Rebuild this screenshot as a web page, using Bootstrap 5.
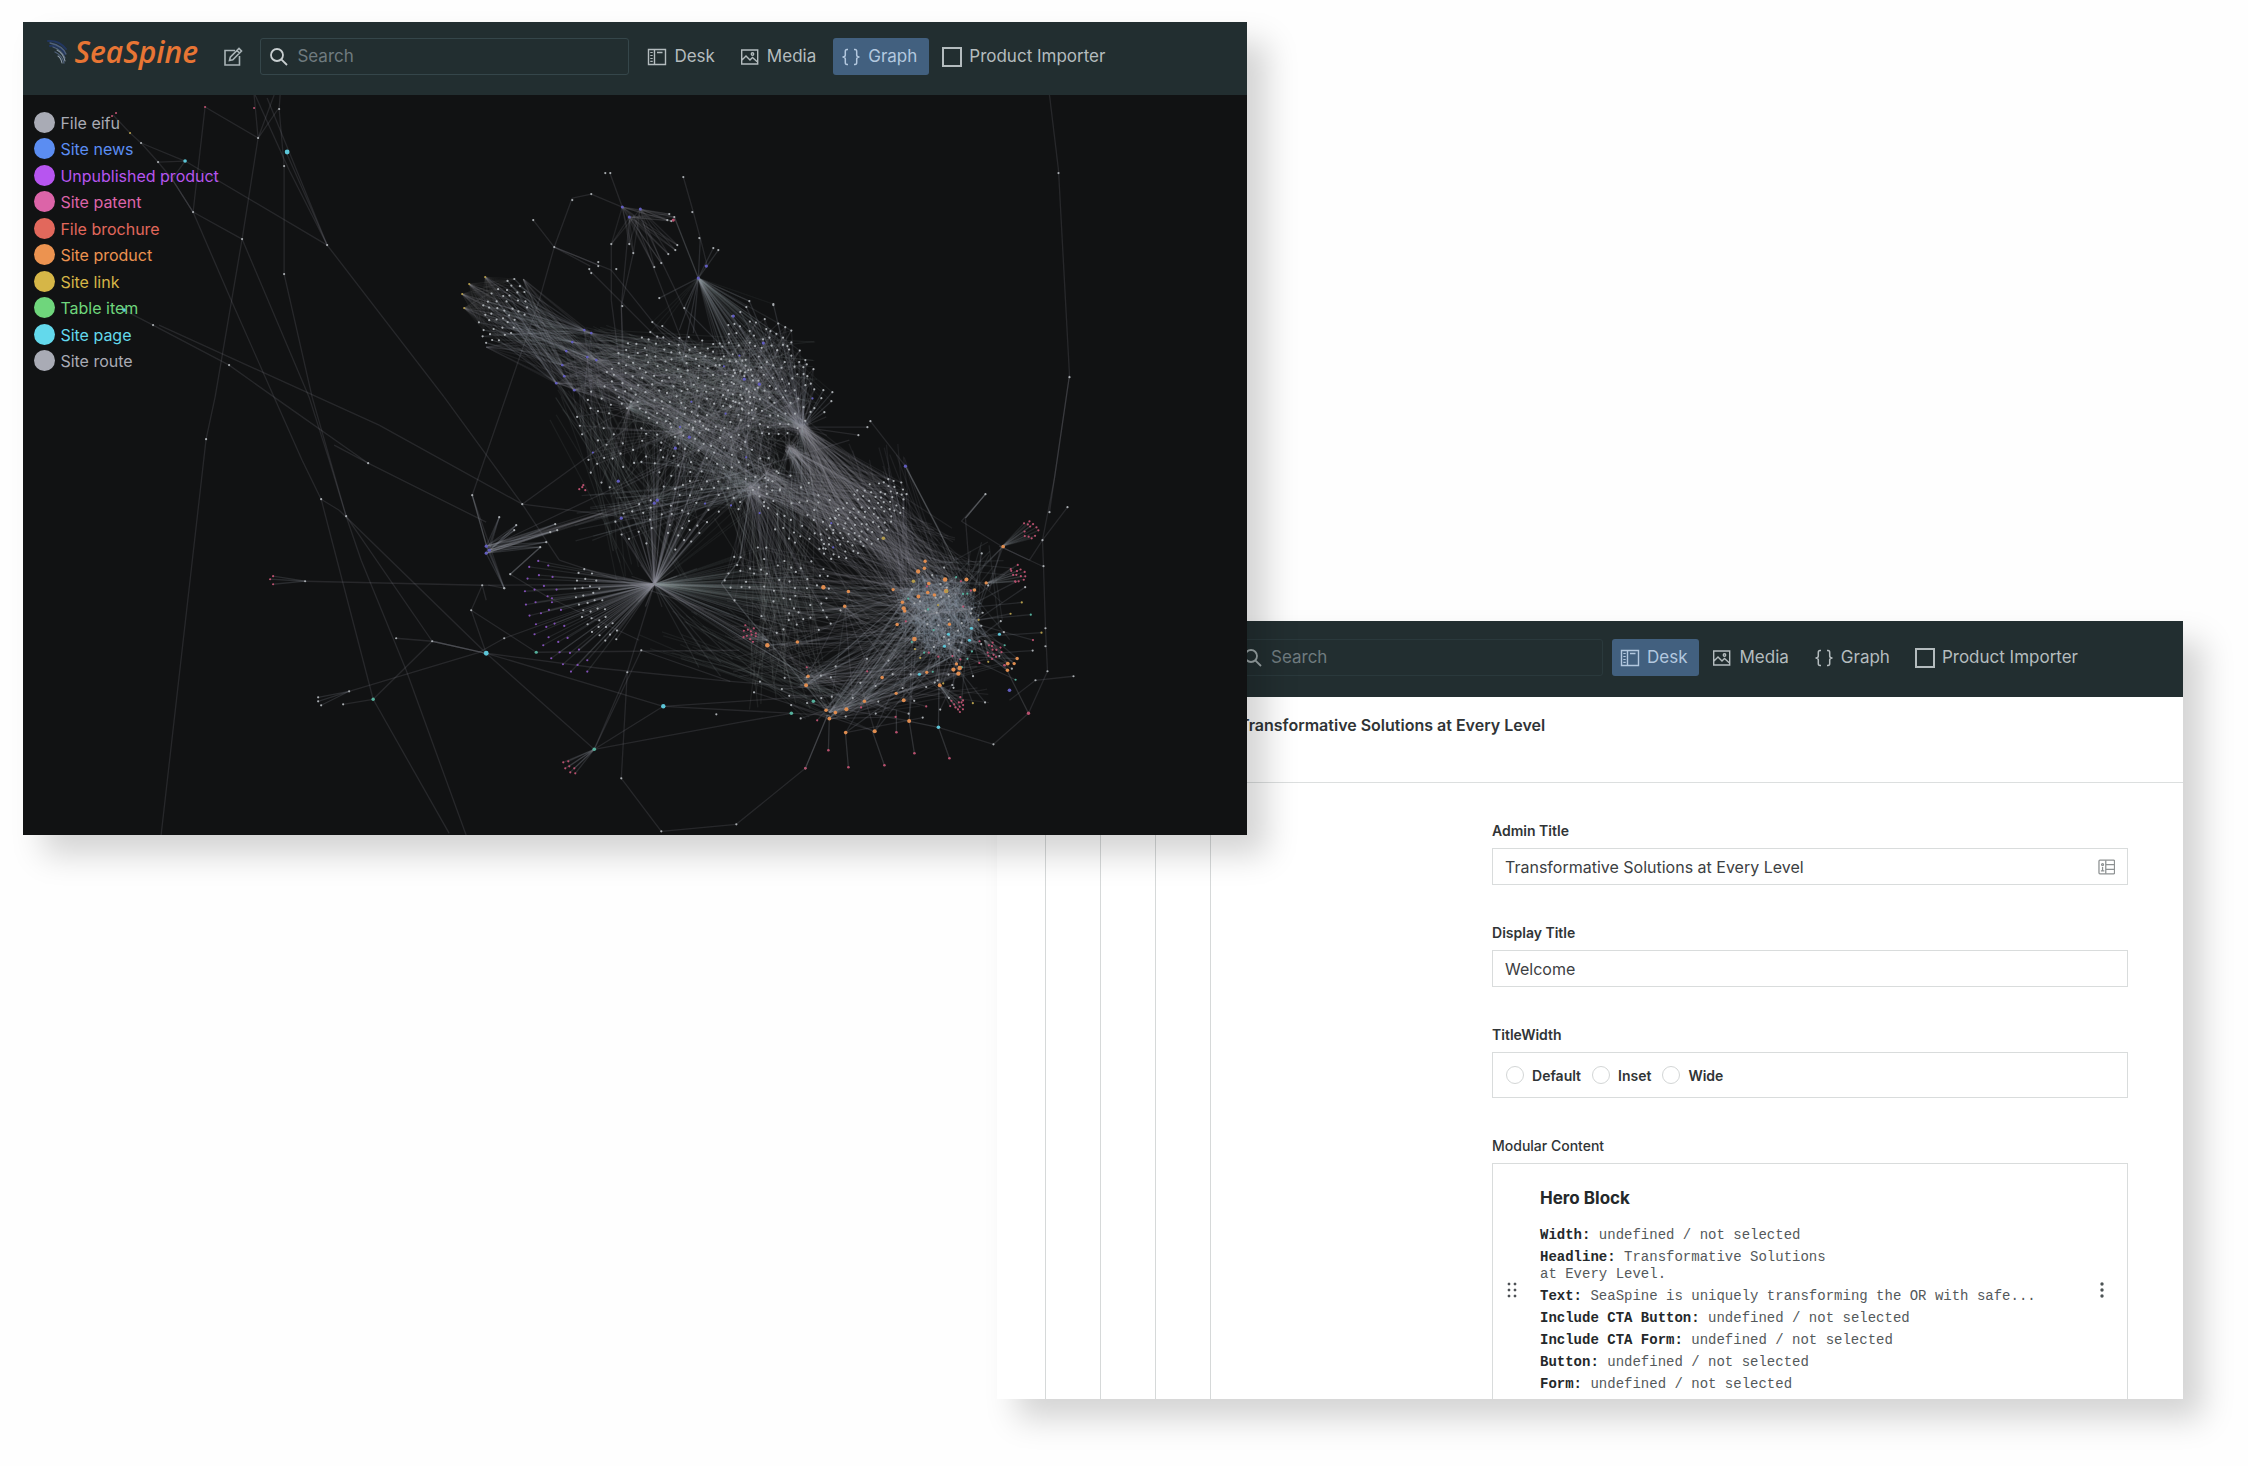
<!DOCTYPE html>
<html lang="en">
<head>
<meta charset="utf-8">
<meta name="viewport" content="width=device-width, initial-scale=1">
<title>SeaSpine Studio</title>
<link href="https://cdn.jsdelivr.net/npm/bootstrap@5.3.0/dist/css/bootstrap.min.css" rel="stylesheet">
<style>
  body { font-family: Inter, "Liberation Sans", sans-serif; font-size: 16px; color: #303436; background: #fefefe; }
  .desktop { position: relative; min-height: 1466px; overflow: hidden; }
  .studio { position: absolute; box-shadow: 20px 20px 30px rgba(0,0,0,.17); }
  .studio-graph { left: 1.04%; width: 54.43%; top: 22px; z-index: 2; background: #111213; }
  .studio-desk { left: 44.35%; width: 52.76%; top: 621px; height: 778px; background: #fff; z-index: 1; }
  .studio-body { overflow: hidden; height: 702px; }

  .topbar { background: #222e30; height: 73px; padding: 16px 20px 0 24px; }
  .studio-desk .topbar { height: 76px; padding: 18px 20px 0 237px; }
  .brand-link { width: 155px; height: 37px; color: #e87534; text-decoration: none; font: italic 600 30px/37px "Open Sans", "Noto Sans", sans-serif; }
  .brand-link svg { margin-right: 5px; }
  .brand-link span { position: relative; top: -5px; }
  .compose { width: 20px; height: 37px; margin: 0 17px 0 21px; color: #a9b3b6; background: none; border: 0; padding: 0; }
  .searchbox { flex: 0 1 369px; height: 37px; border: 1px solid #35464a; border-radius: 3px; margin-right: 10px; padding: 0 8px; gap: 8px; color: #c9cfd1; }
  .studio-desk .searchbox { border-color: #2a393c; color: #9ba5a7; margin-right: 9px; }
  .searchbox input { background: none; border: 0; outline: 0; width: 100%; color: #c9cfd1; padding: 0; font-size: 17px; }
  .searchbox input::placeholder { color: #6f7b7f; opacity: 1; }
  .tool { height: 37px; padding: 0 12px 0 8px; gap: 7px; color: #b4bcbe; font-size: 17px; text-decoration: none; border-radius: 3px; white-space: nowrap; }
  .tool.active { background: #42607f; color: #b3c8df; }
  .tool svg, .searchbox svg { flex: none; }

  .graph-area { position: relative; aspect-ratio: 1223 / 740; overflow: hidden; }
  .graph-area > svg { position: absolute; inset: 0; width: 100%; height: 100%; }
  .legend { position: absolute; left: 11px; top: 17px; height: 260px; }
  .legend li { gap: 5px; line-height: 22px; color: var(--kind); }
  .legend i { width: 21px; height: 21px; border-radius: 50%; background: var(--kind); }

  .strip { width: 55px; flex: none; border-right: 1px solid #d6d9d9; }
  .strip:first-child { width: 49px; }
  .pane-head { height: 86px; border-bottom: 1px solid #dcdfdf; padding: 15px 28px; font-weight: 600; line-height: 26px; }
  .editor { width: 636px; margin: 38px 55px 0 auto; }
  .caption { display: block; font-size: 14px; font-weight: 600; line-height: 20px; margin-bottom: 7px; }
  .box { border: 1px solid #d9dcdc; background: #fff; margin-bottom: 38px; }
  .box-text { height: 37px; padding: 0 12px; }
  .box-text input { border: 0; outline: 0; width: 100%; color: #3c4042; padding: 0; background: none; }
  .box-radio { height: 46px; padding: 0 13px; gap: 11px; font-size: 14px; font-weight: 600; }
  .box-radio .form-check-input { width: 18px; height: 18px; margin: 0; border-color: #d3d6d6; }
  .box-radio label { margin: 0 0 0 8px; }
  .block { padding: 22px 20px 25px 14px; }
  .block-info { padding-left: 21px; }
  .block h2 { font-size: 17px; font-weight: 700; line-height: 24px; margin: 0 0 17px; color: #24282a; }
  .block p { font: 14px/17px "Liberation Mono", monospace; margin: 0 0 5px; color: #54595b; }
  .block b { color: #24282a; }
  .block-menu { background: none; border: 0; padding: 0; color: #4d5355; width: 10px; display: flex; }
</style>
<script src="https://cdn.jsdelivr.net/npm/bootstrap@5.3.0/dist/js/bootstrap.bundle.min.js"></script>
</head>
<body>
<svg width="0" height="0" class="position-absolute" aria-hidden="true">
  <symbol id="i-search" viewBox="0 0 20 20"><g fill="none" stroke="currentColor" stroke-width="1.8"><circle cx="8" cy="8" r="6"/><path d="M12.3 12.3 18 18"/></g></symbol>
  <symbol id="i-desk" viewBox="0 0 20 20"><g fill="none" stroke="currentColor" stroke-width="1.4"><path d="M1.5 2.5h17v15h-17zM7.500 2.500v15M10 5.500h5.500"/><path d="M3.300 5.500h2.400M3.300 8.500h2.400M3.300 11.500h2.400M3.300 14.300h2.400" stroke-width="1.200"/></g></symbol>
  <symbol id="i-media" viewBox="0 0 20 20"><g fill="none" stroke="currentColor" stroke-width="1.400"><path d="M1.700 3h16v14h-16zM2 13l4-4 4 4 2.500-2.500 5 4.500"/><circle cx="12.500" cy="7" r="1.200"/></g></symbol>
  <symbol id="i-graph" viewBox="0 0 20 20"><path d="M7 2.500H6Q4.300 2.500 4.300 4.500V8Q4.300 10 1.500 10 4.300 10 4.300 12v3.500Q4.300 17.500 6 17.500H7M13 2.500h1q1.700 0 1.700 2V8q0 2 2.800 2-2.800 0-2.800 2v3.500q0 2-1.700 2h-1" fill="none" stroke="currentColor" stroke-width="1.500"/></symbol>
  <symbol id="i-square" viewBox="0 0 20 20"><path d="M1 1h18v18H1z" fill="none" stroke="currentColor" stroke-width="2"/></symbol>
  <symbol id="i-compose" viewBox="0 0 20 20"><path d="M12 3.500H2v14.500h14.500V9M6.500 13.500l.8-3.300 8.700-8.700 2.500 2.500-8.700 8.700zM14 3.500l2.500 2.500" fill="none" stroke="currentColor" stroke-width="1.600"/></symbol>
</svg>

<main class="desktop">
  <section class="studio studio-graph">
    <header class="topbar d-flex align-items-start">
      <a href="#" class="brand-link d-flex align-items-start">
        <svg width="22" height="28" viewBox="0 0 22 28" fill="none" stroke-linecap="round"><path d="M1 3Q12 2 19 11M3 8Q12 6 18 16" stroke="#22365f" stroke-width="2"/><path d="M3 5Q16 8 19 16M6 9Q15 12 18 20M8 14Q15 17 17 25" stroke="#50617a" stroke-width="1.300"/><path d="M10 12Q16 15 18 23M11 18Q14 20 15 25" stroke="#8d9ba9" stroke-width="1.100"/></svg>
        <span>SeaSpine</span>
      </a>
      <button class="compose d-flex align-items-center" aria-label="Compose"><svg width="20" height="20"><use href="#i-compose"/></svg></button>
      <label class="searchbox d-flex align-items-center"><svg width="20" height="20"><use href="#i-search"/></svg><input type="text" placeholder="Search" aria-label="Search"></label>
      <nav class="d-flex" style="gap:5px">
        <a href="#" class="tool d-flex align-items-center"><svg width="20" height="20"><use href="#i-desk"/></svg>Desk</a>
        <a href="#" class="tool d-flex align-items-center"><svg width="20" height="20"><use href="#i-media"/></svg>Media</a>
        <a href="#" class="tool active d-flex align-items-center"><svg width="20" height="20"><use href="#i-graph"/></svg>Graph</a>
        <a href="#" class="tool d-flex align-items-center"><svg width="20" height="20"><use href="#i-square"/></svg>Product Importer</a>
      </nav>
    </header>
    <div class="graph-area">
      <ul class="legend list-unstyled mb-0 d-flex flex-column justify-content-between">
        <li class="d-flex" style="--kind:#a9abb5"><i></i>File eifu</li>
        <li class="d-flex" style="--kind:#5b8df2"><i></i>Site news</li>
        <li class="d-flex" style="--kind:#b755f0"><i></i>Unpublished product</li>
        <li class="d-flex" style="--kind:#dc64a8"><i></i>Site patent</li>
        <li class="d-flex" style="--kind:#e2685c"><i></i>File brochure</li>
        <li class="d-flex" style="--kind:#ec9350"><i></i>Site product</li>
        <li class="d-flex" style="--kind:#d6b647"><i></i>Site link</li>
        <li class="d-flex" style="--kind:#6fd67c"><i></i>Table item</li>
        <li class="d-flex" style="--kind:#63d9ec"><i></i>Site page</li>
        <li class="d-flex" style="--kind:#a9abb5"><i></i>Site route</li>
      </ul>
      <svg id="graph" viewBox="24 95 1223 740" preserveAspectRatio="xMidYMid slice" role="img" aria-label="Content graph"></svg>
    </div>
  </section>

  <section class="studio studio-desk">
    <header class="topbar d-flex align-items-start">
      <label class="searchbox d-flex align-items-center"><svg width="20" height="20"><use href="#i-search"/></svg><input type="text" placeholder="Search" aria-label="Search"></label>
      <nav class="d-flex" style="gap:5px">
        <a href="#" class="tool active d-flex align-items-center"><svg width="20" height="20"><use href="#i-desk"/></svg>Desk</a>
        <a href="#" class="tool d-flex align-items-center"><svg width="20" height="20"><use href="#i-media"/></svg>Media</a>
        <a href="#" class="tool d-flex align-items-center"><svg width="20" height="20"><use href="#i-graph"/></svg>Graph</a>
        <a href="#" class="tool d-flex align-items-center"><svg width="20" height="20"><use href="#i-square"/></svg>Product Importer</a>
      </nav>
    </header>
    <div class="studio-body d-flex">
      <div class="strip"></div><div class="strip"></div><div class="strip"></div><div class="strip"></div>
      <div class="flex-grow-1">
        <div class="pane-head">Transformative Solutions at Every Level</div>
        <form class="editor">
          <label class="caption" for="admin">Admin Title</label>
          <div class="box box-text d-flex align-items-center">
            <input id="admin" type="text" value="Transformative Solutions at Every Level">
            <svg width="18" height="16" viewBox="0 0 18 16" fill="none" stroke="#8d9192" stroke-width="1.300"><rect x="1" y="1" width="16" height="14" rx="1"/><path d="M8 1v14M8 5.500h9M8 10.500h9M3 12h3.500M4.700 12V8"/><circle cx="4.700" cy="5.500" r="1"/></svg>
          </div>
          <label class="caption" for="display">Display Title</label>
          <div class="box box-text d-flex align-items-center"><input id="display" type="text" value="Welcome"></div>
          <span class="caption" id="tw">TitleWidth</span>
          <div class="box box-radio d-flex align-items-center" role="radiogroup" aria-labelledby="tw">
            <div class="d-flex align-items-center"><input class="form-check-input" type="radio" name="w" id="w1"><label for="w1">Default</label></div>
            <div class="d-flex align-items-center"><input class="form-check-input" type="radio" name="w" id="w2"><label for="w2">Inset</label></div>
            <div class="d-flex align-items-center"><input class="form-check-input" type="radio" name="w" id="w3"><label for="w3">Wide</label></div>
          </div>
          <span class="caption fw-medium">Modular Content</span>
          <div class="box block d-flex align-items-center">
            <svg width="12" height="16" viewBox="0 0 12 16" fill="#4d5355"><path d="M1 1h2v2H1zM7 1h2v2H7zM1 7h2v2H1zM7 7h2v2H7zM1 13h2v2H1zM7 13h2v2H7z" stroke="#4d5355" stroke-width=".5"/></svg>
            <div class="block-info flex-grow-1">
              <h2>Hero Block</h2>
              <p><b>Width:</b> undefined / not selected</p>
              <p><b>Headline:</b> Transformative Solutions<br>at Every Level.</p>
              <p><b>Text:</b> SeaSpine is uniquely transforming the OR with safe...</p>
              <p><b>Include CTA Button:</b> undefined / not selected</p>
              <p><b>Include CTA Form:</b> undefined / not selected</p>
              <p><b>Button:</b> undefined / not selected</p>
              <p class="mb-0"><b>Form:</b> undefined / not selected</p>
            </div>
            <button type="button" class="block-menu" aria-label="Block menu"><svg width="10" height="18" viewBox="0 0 10 18" fill="currentColor"><circle cx="5" cy="3" r="1.700"/><circle cx="5" cy="9" r="1.700"/><circle cx="5" cy="15" r="1.700"/></svg></button>
          </div>
        </form>
      </div>
    </div>
  </section>
</main>

<script>
// Content graph: documents are dots, references between them are faint lines.
(function () {
  let seed = 20231;
  const rnd = () => (seed = (seed * 16807) % 2147483647) / 2147483647;
  const edges = [], nodes = [];
  const C = { n: '#a9adb1', o: '#e08d50', p: '#8250b8', r: '#b8506e', c: '#5cc6d8', b: '#625dc0', y: '#b39c4c', g: '#55b09c' };
  const edge = (a, b, o = .17, w = 1.3, c = '#92979f') => edges.push(`<line x1="${a[0].toFixed(1)}" y1="${a[1].toFixed(1)}" x2="${b[0].toFixed(1)}" y2="${b[1].toFixed(1)}" stroke="${c}" stroke-opacity="${o}" stroke-width="${w}"/>`);
  const node = (p, k = 'n', r = 1.1) => nodes.push(`<circle cx="${p[0].toFixed(1)}" cy="${p[1].toFixed(1)}" r="${r}" fill="${C[k]}"/>`);
  const path = (list, o = .17) => { for (let i = 1; i < list.length; i++) edge(list[i - 1], list[i], o); };
  const fan = (hub, list, o = .17) => list.forEach(p => edge(hub, p, o));
  const pairs = s => s.trim().split(/\s+/).map(t => t.split(',').map(Number));
  const pick = a => a[Math.floor(rnd() * a.length)];
  const near = (h, r) => [h[0] + (rnd() - .5) * 2 * r, h[1] + (rnd() - .5) * 2 * r];
  // n points spread evenly over a tilted ellipse
  const cloud = (n, x, y, rx, ry, deg, gap = 4) => {
    const out = [], t = deg * Math.PI / 180;
    for (let k = 0; k < n * 30 && out.length < n; k++) {
      const a = rnd() * 6.283, d = Math.sqrt(rnd()), u = rx * d * Math.cos(a), v = ry * d * Math.sin(a);
      const p = [x + u * Math.cos(t) - v * Math.sin(t), y + u * Math.sin(t) + v * Math.cos(t)];
      if (out.every(q => Math.hypot(q[0] - p[0], q[1] - p[1]) > gap)) out.push(p);
    }
    return out;
  };

  // sparse outer web
  [ '206,107 194,212 243,239', '206,107 259,138 279,109', '255,95 259,138 243,239 216,397 207,439 162,835',
    '281,95 280,109 285,166 285,274 313,397 347,516', '268,98 328,245 445,397 523,504 560,560 800,640', '256,95 290,170 328,245', '287,152 328,245', '275,95 259,138',
    '114,115 131,133 142,143 159,162 173,179 194,212 232,300 275,397 303,460 322,499 374,699 450,833',
    '142,143 186,161 173,179', '159,162 186,161 328,245', '243,239 310,397 330,460 347,516 362,560 407,670 467,835',
    '173,179 194,212', '125,310 154,325 230,365 275,397 369,463 487,522', '160,325 380,425 523,504 650,520 720,490', '335,445 369,463',
    '322,499 340,510 487,653', '347,516 433,641 487,653', '306,581 483,585 655,584', '397,638 433,641 487,653', '433,641 374,699 344,704',
    '350,691 480,652 505,638 655,584', '555,247 540,300 485,460 473,495 488,548', '483,585 472,610 487,653 595,749 628,672 655,584',
    '472,610 537,652 740,650', '487,653 664,706 830,695', '487,653 600,668 731,681 840,690', '595,749 664,706', '642,650 595,749 740,722 792,713', '642,650 731,681', '664,706 830,715',
    '628,672 622,778 662,831 737,824', '489,585 505,588 473,495', '511,574 541,547', '511,574 549,597 640,640',
    '534,220 555,247 573,198 592,194 623,207', '555,247 591,266', '555,247 599,265', '555,247 612,270 660,330 760,420', '590,270 660,340', '611,174 623,207', '684,177 694,212 701,238 708,266',
    '1050,95 1059,170 1070,375 1055,478 1043,540 1044,566 1046,628 1048,671', '1070,375 1050,512', '1068,507 1043,540 1030,560 1000,546', '1043,566 1000,546', '939,727 994,744 1029,713 1048,671',
    '871,421 906,466 940,530 960,580', '868,427 803,427', '859,435 803,427', '986,494 966,518 970,570', '986,494 962,521 1002,546 990,590', '487,600 483,585', '1074,676 1036,680 1010,700', '523,504 625,430 682,432', '618,490 800,400', '488,548 850,440', '488,548 800,400'
  ].forEach(s => path(pairs(s)));
  path(pairs('737,824 806,768 828,715')); path(pairs('906,466 932,516 955,560'), .35); path(pairs('986,494 966,518'), .35); path(pairs('473,495 488,548'), .3); path(pairs('433,641 487,653'), .2);
  pairs('259,138 280,109 285,166 194,212 243,239 328,245 285,274 154,325 230,365 142,143 159,162 207,439 369,463 322,499 347,516 306,581 397,638 433,641 344,704 350,691 523,504 473,495 483,585 472,610 505,588 511,574 505,638 628,672 622,778 662,831 737,824 806,768 642,650 319,697 319,701 322,705 534,220 555,247 573,200 592,194 599,262 599,266 590,269 592,273 606,173 611,173 617,269 623,306 660,298 684,177 693,212 700,238 714,248 719,250 871,421 868,427 859,435 986,494 1059,173 1070,377 1044,566 1043,540 1050,512 1068,507 1046,628 1046,646 1048,671 994,744 1074,676 1036,680 717,714 774,305').forEach(p => node(p));
  node([206, 107], 'r'); node([255, 108], 'r'); node([131, 133], 'y');
  node([288, 152], 'c', 2.4); node([186, 161], 'c', 1.8); node([125, 310], 'c', 1.8); node([487, 653], 'c', 2.4); node([664, 706], 'c', 2.2);
  node([374, 699], 'g', 1.7); node([595, 749], 'g', 1.8); node([537, 652], 'g', 1.6); node([117, 113], 'r'); node([113, 116], 'r');
  const reds = pairs('564,762 569,761 570,766 575,768 566,768 571,772 576,773');
  fan([595, 749], reds, .2); reds.forEach(p => node(p, 'r'));
  const eifu = pairs('271,579 274,576 274,584'); fan([306, 581], eifu, .2); eifu.forEach(p => node(p, 'r'));
  fan([350, 691], pairs('319,697 319,701 322,705'), .2);

  // left satellite hub
  const sat = pairs('500,517 517,525 515,530 556,524 551,532 558,530 547,542 541,547 505,588');
  [[487, 546], [490, 550], [487, 553]].forEach(h => { fan(h, sat, .2); node(h, 'b', 1.6); fan(h, pairs('603,513 640,505 700,480'), .14); });
  sat.forEach(p => node(p)); edge([541, 547], [511, 574], .3, 1.5);

  // lower fan
  const H = [655, 584];
  const outer = pairs('897,302 870,320 927,316 899,345 865,355 940,350 857,393 886,388 914,377 952,388 925,408 938,414 860,433 889,426 938,426 871,466 905,459 929,449 965,449 890,492 921,500 946,490 975,497 886,522 928,531 985,533 957,545 912,555 961,576 992,578 1019,568 936,594 971,612 1015,614 1044,600 995,634 1044,634').map(([x, y]) => [240 + x / 3, 460 + y / 3]);
  const inner = pairs('1035,327 1018,338 1058,340 1013,361 1038,356 1071,361 1007,385 1030,383 1052,378 1080,385 1010,411 1032,406 1062,398 1089,420 1019,433 1045,428 1066,420 1032,450 1054,454 1075,445 1097,447 1028,470 1057,474 1080,480 1099,470 1045,492 1120,489 1078,500 1100,500 1133,511 1058,515 1081,525 1112,523 1098,541 1131,537').map(([x, y]) => [240 + x / 3, 460 + y / 3]);
  outer.forEach(p => { edge(H, p, .15); node(p, 'p', 1.1); });
  inner.forEach(p => { edge(H, p, .17); node(p); });

  // upper-left comb
  const comb = cloud(44, 504, 312, 36, 21, -62, 6);
  const tips = pairs('470,284 486,277 463,294 465,308');
  const joints = pairs('585,330 592,333 573,342 567,351 563,365 565,376 557,383 575,390 588,357 597,360');
  tips.forEach(t => { comb.slice(0, 20).forEach(p => edge(t, p, .06)); joints.forEach(j => edge(t, j, .1)); node(t, 'y'); });
  comb.forEach(p => { edge(p, pick(joints), .18); edge(p, near([610, 370], 30), .08); node(p); });
  fan([524, 279], joints, .12); fan([487, 347], joints, .1);
  joints.forEach(p => node(p, 'b', 1.3));

  // top tuft
  const tuft = pairs('670,214 675,217 668,220 672,221 678,245 676,250 669,254 662,263 655,267 612,244 630,244 634,253');
  [[623, 207], [630, 217], [641, 209]].forEach(h => { fan(h, tuft, .14); node(h, 'b', 1.5); });
  tuft.forEach(p => node(p)); node([674, 220], 'r', 1.6);
  path(pairs('612,244 612,300 625,400')); path(pairs('630,220 622,306 624,400')); path(pairs('675,217 699,278'), .3);
  path(pairs('634,253 622,306 625,370')); path(pairs('640,215 700,340')); path(pairs('634,215 690,360'));

  // main body
  const A = [803, 427], B = [790, 448], Cc = [767, 473], D = [752, 487], E = [630, 407], F = [682, 432], G = [699, 278], K = [658, 500];
  const b1 = cloud(150, 685, 382, 80, 48, 10, 6), b2 = cloud(105, 768, 375, 48, 62, -20, 6), b3 = cloud(80, 705, 465, 80, 42, 20, 7);
  const west = cloud(26, 604, 440, 24, 62, -12, 8);
  const b4 = cloud(105, 864, 518, 56, 26, -42, 4.8), b5 = cloud(42, 800, 510, 50, 32, 35, 7), b6 = cloud(58, 785, 590, 62, 44, 20, 6);
  const b7 = cloud(30, 660, 525, 50, 26, 0, 7);
  const arc = pairs('750,301 747,307 741,312 729,325 733,316 767,329 774,304 788,346 806,360 804,367 808,376 806,385 824,390 833,392 822,398 832,401 815,408 825,412 653,322 663,326 685,308 651,332');
  const body = [...b1, ...b2, ...b3];
  b1.forEach(p => { edge(p, pick([E, F, A, near(Cc, 40)]), .09); edge(p, near([700, 420], 90), .11); if (rnd() < .7) edge(p, pick(joints), .1); });
  b2.forEach(p => { edge(p, near(A, 8), .1); edge(p, near([740, 440], 60), .12); if (rnd() < .3) edge(p, G, .13); });
  b3.forEach(p => { edge(p, near(pick([F, Cc, D]), 10), .13); edge(p, pick([K, D, H, E]), .08); });
  west.forEach(p => { edge(p, pick([E, F]), .12); edge(p, pick([...joints, K]), .1); });
  arc.forEach(p => { edge(p, A, .2); edge(p, G, .07); });
  for (let i = 0; i < 190; i++) edge(pick(body), pick(body), .1);
  for (let i = 0; i < 60; i++) edge(near([580, 365], 25), near([760, 470], 25), .1);
  for (let i = 0; i < 50; i++) edge(near([600, 345], 20), near([780, 380], 40), .09);
  fan(G, [[685, 308], [660, 298], [714, 248], [719, 250], [701, 238], [750, 301], [747, 307], [741, 312], [694, 333], [683, 360], [680, 330]], .2);
  b4.forEach(p => { edge(p, near(pick([A, B]), 4), .12); edge(p, near(pick([Cc, D, A]), 6), .1); edge(p, [900 + rnd() * 80, 560 + rnd() * 60], .1); });
  b5.forEach(p => edge(p, pick([A, B, Cc, D]), .13));
  b6.forEach(p => { edge(p, near(D, 8), .1); edge(p, H, .08); if (rnd() < .6) edge(p, [905 + rnd() * 80, 580 + rnd() * 70], .12); });
  b7.forEach(p => { edge(p, H, .17); edge(p, pick([K, D, F]), .1); });
  for (let i = 0; i < 95; i++) edge(near(pick([A, B, Cc, D]), 5), [850 + rnd() * 110, 520 + rnd() * 110], .12);
  for (let i = 0; i < 60; i++) edge([800 + rnd() * 110, 440 + rnd() * 80], [900 + rnd() * 60, 560 + rnd() * 80], .1);
  for (let i = 0; i < 34; i++) edge(H, [690 + rnd() * 130, 560 + rnd() * 120], .13);
  for (let i = 0; i < 16; i++) edge(H, [640 + rnd() * 100, 430 + rnd() * 70], .17);
  for (let i = 0; i < 20; i++) edge(H, [860 + rnd() * 80, 580 + rnd() * 50], .09);
  for (let i = 0; i < 44; i++) edge([710 + rnd() * 120, 450 + rnd() * 70], [750 + rnd() * 90, 600 + rnd() * 110], .11);
  for (let i = 0; i < 40; i++) edge(near([580, 400], 30), near([650, 540], 40), .09);
  for (let i = 0; i < 18; i++) edge(near([600, 520], 25), near(D, 10), .13);
  for (let i = 0; i < 12; i++) edge(H, [835 + rnd() * 60, 700 + rnd() * 15], .1);
  for (let i = 0; i < 34; i++) edge([640 + rnd() * 90, 600 + rnd() * 60], [800 + rnd() * 60, 690 + rnd() * 30], .09);
  path(pairs('767,473 752,487 740,560 722,583 733,598 827,710'), .3);
  [b1, b2, b3, west, arc, b4, b5, b6, b7].forEach(g => g.forEach(p => node(p, rnd() < .03 ? 'b' : 'n')));
  [G, [707, 266], K, [655, 503], [619, 481], [734, 316], [764, 343], [906, 466], [622, 518], [690, 437], [676, 448], [745, 379], [760, 384]].forEach(p => node(p, 'b', 1.6));
  pairs('580,489 584,485 586,490 583,487').forEach(p => node(p, 'r'));
  [[A, 26], [H, 24], [B, 14], [D, 18], [Cc, 16], [E, 10], [F, 12]].forEach(([h, r]) => { for (let i = 0; i < 14; i++) { const a = rnd() * 6.283; edge(h, [h[0] + r * Math.cos(a), h[1] + r * Math.sin(a)], .14); } });

  // product cluster, lower right
  const core = cloud(120, 942, 617, 50, 42, 40, 4);
  for (let i = 0; i < 300; i++) edge(pick(core), pick(core), .14, 1.3, '#8893a3');
  const orange = pairs('617,483 615,504 596,514 628,550 677,538 741,538 800,548 765,569 625,577 645,584 597,589 680,572 521,568 549,606 553,624 533,673 585,716 690,672 312,561 387,574 376,618 234,725 144,735 266,828 260,855 320,930 330,955 348,937 381,927 435,903 379,997 466,993 569,962 553,900 530,879 622,816 711,791 721,803 702,808 717,820 661,855 865,790 884,790 893,775 864,810 851,439 488,832 556,632').map(([x, y]) => [720 + x / 3, 400 + y / 3]);
  const L = [830, 712];
  orange.forEach((p, i) => { edge(p, pick(core), .2); edge(p, pick(core), .16); if (i % 2) edge(p, L, .13); });
  for (let i = 0; i < 56; i++) edge(pick(core), near(pick([L, [806, 680], [846, 709], [865, 701]]), 6), .13);
  for (let i = 0; i < 40; i++) edge([722 + rnd() * 70, 560 + rnd() * 120], pick([L, ...core.slice(0, 12)]), .12);
  for (let i = 0; i < 36; i++) edge(near(pick([L, [806, 680]]), 8), [870 + rnd() * 130, 640 + rnd() * 70], .12);
  for (let i = 0; i < 24; i++) edge([905 + rnd() * 90, 540 + rnd() * 30], [930 + rnd() * 90, 560 + rnd() * 100], .13);
  const rim = cloud(50, 975, 630, 68, 78, 0, 8), low = cloud(40, 860, 690, 108, 34, 0, 9);
  rim.forEach(p => { edge(p, pick(core), .18); node(p, pick(['n', 'n', 'n', 'r', 'y', 'g'])); });
  low.forEach(p => { edge(p, pick(orange.slice(20, 40)), .17); node(p, pick(['n', 'n', 'r', 'n'])); });
  [[[1003, 546], [1031, 530]], [[987, 583], [1018, 574]], [[940, 685], [958, 703]], [[768, 640], [751, 633]], [[985, 640], [994, 650]]].forEach(([h, c]) => cloud(12, c[0], c[1], 8, 10, -20, 3).forEach(p => { edge(h, p, .15); node(p, 'r', 1.1); }));
  [[[830, 715], [829, 750]], [[846, 732], [849, 767]], [[873, 731], [885, 765]], [[910, 722], [915, 753]], [[939, 727], [950, 758]], [[828, 715], [806, 768]], [[897, 710], [897, 732]], [[940, 650], [939, 727]], [[939, 727], [910, 721]], [[1029, 713], [1005, 665]]].forEach(([a, b]) => { edge(a, b, .24); node(b, 'r', 1.3); });
  core.slice(0, 30).forEach(p => node(p, pick(['n', 'n', 'g', 'n', 'r'])));
  orange.forEach(p => node(p, 'o', 1.6 + rnd() * .7));
  pairs('884,538 914,581 947,591').forEach(p => node(p, 'y', 1.8));
  pairs('949,634 972,628 970,640 945,646 920,674 1000,634').forEach(p => node(p, 'c', 1.6));
  pairs('814,701 792,713').forEach(p => node(p, 'g', 1.8)); node([939, 727], 'c', 1.8); node([1010, 690], 'b', 1.8); node([1029, 713], 'r', 1.7);

  document.getElementById('graph').innerHTML = edges.join('') + nodes.join('');
})();
</script>
</body>
</html>
